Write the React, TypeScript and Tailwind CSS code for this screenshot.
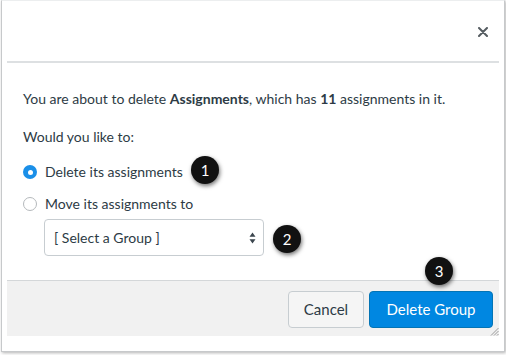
import React from "react";

function Badge({ n, className }: { n: number; className: string }) {
  return (
    <span
      className={`absolute flex h-[28px] w-[28px] items-center justify-center rounded-full bg-[#111] text-[15px] text-white shadow-[1px_2px_4px_rgba(0,0,0,0.55)] ${className}`}
    >
      {n}
    </span>
  );
}

function Radio({ checked }: { checked?: boolean }) {
  return checked ? (
    <span className="flex h-[14px] w-[14px] items-center justify-center rounded-full bg-[#1a8fe8]">
      <span className="h-[5px] w-[5px] rounded-full bg-white" />
    </span>
  ) : (
    <span className="h-[14px] w-[14px] rounded-full border border-[#b5b9bc] bg-white" />
  );
}

export default function App() {
  return (
    <div className="h-[355px] w-[506px] bg-white font-['Lato','Liberation_Sans',sans-serif] text-[#2d3b45]">
      <div className="relative ml-[1px] flex h-[352px] w-[504px] flex-col border border-t-[#eceeef] border-[#c7c9cb] bg-white shadow-[1px_1px_3px_rgba(0,0,0,0.3)]">
        <header className="mx-[5px] flex h-[62px] shrink-0 items-center justify-end border-b-2 border-[#dde0e2] pr-[11px]">
          <svg width="10" height="10" viewBox="0 0 10 10" className="mt-[2px]">
            <path d="M1 1L9 9M9 1L1 9" stroke="#555c61" strokeWidth="2" strokeLinecap="round" />
          </svg>
        </header>

        <div className="flex-1 px-[21px] pt-[26px] text-[14px] leading-[20px]">
          <p>
            You are about to delete <span className="font-bold">Assignments</span>, which has{" "}
            <span className="font-bold">11</span> assignments in it.
          </p>
          <p className="mt-[18px]">Would you like to:</p>
          <label className="mt-[15px] flex items-center gap-[8px]">
            <Radio checked />
            <span>Delete its assignments</span>
          </label>
          <label className="mt-[12px] flex items-center gap-[8px]">
            <Radio />
            <span>Move its assignments to</span>
          </label>
          <div className="ml-[21px] mt-[5px] flex h-[37px] w-[220px] items-center justify-between rounded-[4px] border border-[#c7cdd1] bg-white pl-[9px] pr-[7px]">
            <span>[ Select a Group ]</span>
            <svg width="7" height="12" viewBox="0 0 7 12">
              <path d="M3.5 0.5L6.5 4.8H0.5Z M3.5 11.5L6.5 7.2H0.5Z" fill="#3b464e" />
            </svg>
          </div>
        </div>

        <footer className="relative mx-[5px] mb-[15px] flex h-[56px] shrink-0 items-center justify-end gap-[5px] border-t border-[#d4d7d9] bg-[#f1f1f1] pr-[6px] pt-[1px]">
          <button className="h-[37px] w-[76px] rounded-[4px] border border-[#c7cdd1] bg-[#f5f5f5] text-[15px] text-[#2d3b45]">
            Cancel
          </button>
          <button className="h-[37px] w-[124px] rounded-[4px] border border-[#0374b5] bg-[#0087e1] text-[15px] text-white">
            Delete Group
          </button>
          <svg width="9" height="9" viewBox="0 0 9 9" className="absolute bottom-0 right-0">
            <path d="M8.5 1L1 8.5M8.5 4L4 8.5M8.5 7L7 8.5" stroke="#9a9a9a" strokeWidth="1" />
          </svg>
        </footer>

        <Badge n={1} className="left-[189px] top-[155px]" />
        <Badge n={2} className="left-[271px] top-[224px]" />
        <Badge n={3} className="left-[423px] top-[256px]" />
      </div>
    </div>
  );
}
